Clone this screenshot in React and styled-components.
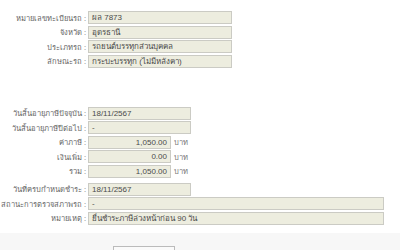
import React from "react"
import styled, { createGlobalStyle } from "styled-components"

const GlobalStyle = createGlobalStyle`
  html, body {
    margin: 0;
    padding: 0;
    background: #ffffff;
  }
  body {
    font-family: Tahoma, "Liberation Sans", "Noto Sans", sans-serif;
    font-size: 8px;
    color: #555;
  }
`

const vehicle = [
  { label: "หมายเลขทะเบียนรถ", value: "ผล 7873" },
  { label: "จังหวัด", value: "อุดรธานี" },
  { label: "ประเภทรถ", value: "รถยนต์บรรทุกส่วนบุคคล" },
  { label: "ลักษณะรถ", value: "กระบะบรรทุก (ไม่มีหลังคา)" },
]

const tax = [
  { label: "วันสิ้นอายุภาษีปัจจุบัน", value: "18/11/2567", size: "date" },
  { label: "วันสิ้นอายุภาษีปีต่อไป", value: "-", size: "date" },
  { label: "ค่าภาษี", value: "1,050.00", size: "money" },
  { label: "เงินเพิ่ม", value: "0.00", size: "money" },
  { label: "รวม", value: "1,050.00", size: "money" },
  { label: "วันที่ครบกำหนดชำระ", value: "18/11/2567", size: "date", gapTop: true },
  { label: "สถานะการตรวจสภาพรถ", value: "-", size: "long" },
  { label: "หมายเหตุ", value: "ยื่นชำระภาษีล่วงหน้าก่อน 90 วัน", size: "long" },
]

const widths = { short: 144, date: 103, money: 83, long: 296 }

export default function App() {
  return (
    <Page>
      <GlobalStyle />
      <Section $top={11}>
        {vehicle.map((r) => (
          <Row key={r.label}>
            <Label>{r.label} :</Label>
            <Field $w={widths.short}>{r.value}</Field>
          </Row>
        ))}
      </Section>
      <Section $top={39}>
        {tax.map((r) => (
          <Row key={r.label} $gapTop={r.gapTop}>
            <Label>{r.label} :</Label>
            <Field $w={widths[r.size]} $right={r.size === "money"}>
              {r.value}
            </Field>
            {r.size === "money" && <Unit>บาท</Unit>}
          </Row>
        ))}
      </Section>
      <Footer>
        <Button>&nbsp;</Button>
      </Footer>
    </Page>
  )
}

const Page = styled.div`
  width: 400px;
  height: 250px;
  overflow: hidden;
  display: flex;
  flex-direction: column;
`

const Section = styled.div`
  margin-top: ${(p) => p.$top}px;
  display: flex;
  flex-direction: column;
  gap: 1.5px;
`

const Row = styled.div`
  display: flex;
  align-items: center;
  height: 13px;
  margin-top: ${(p) => (p.$gapTop ? "3.5px" : "0")};
`

const Label = styled.div`
  box-sizing: border-box;
  width: 88px;
  flex-shrink: 0;
  padding-right: 2px;
  display: flex;
  justify-content: flex-end;
  white-space: nowrap;
  color: #666;
  font-size: 7.6px;
`

const Field = styled.div`
  box-sizing: border-box;
  width: ${(p) => p.$w}px;
  height: 13px;
  line-height: 11px;
  padding: 0 3px;
  background: #ededdf;
  border: 1px solid #cbcbc4;
  color: #4a4a4a;
  font-size: 8px;
  white-space: nowrap;
  overflow: hidden;
  text-align: ${(p) => (p.$right ? "right" : "left")};
`

const Unit = styled.span`
  margin-left: 3px;
  color: #777;
  font-size: 7.6px;
`

const Footer = styled.div`
  margin-top: auto;
  height: 17px;
  background: #f7f7f7;
  display: flex;
  align-items: flex-end;
  padding-left: 113px;
`

const Button = styled.div`
  width: 60px;
  height: 3px;
  border: 1px solid #bbb;
  border-bottom: none;
  background: #fafafa;
`
